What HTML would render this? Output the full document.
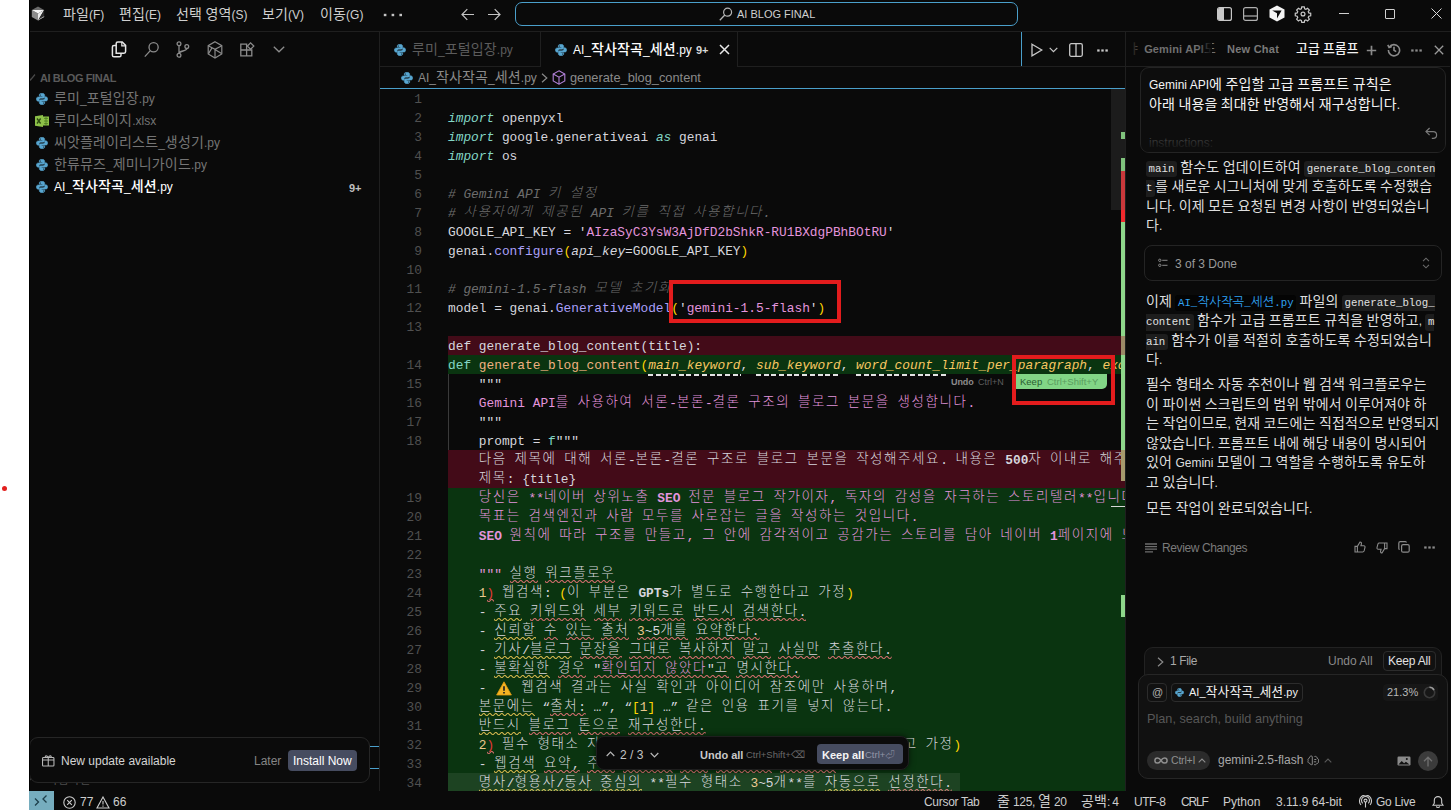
<!DOCTYPE html>
<html lang="ko">
<head>
<meta charset="utf-8">
<title>AI BLOG FINAL</title>
<style>
*{box-sizing:border-box}
html,body{margin:0;padding:0}
body{width:1451px;height:810px;position:relative;overflow:hidden;background:#0a0a0a;color:#ccc;
 font-family:"Liberation Sans","Noto Sans CJK KR",sans-serif;font-size:12px}
.abs{position:absolute}
svg{display:block}
#strip{left:0;top:0;width:29px;height:810px;background:#fff}
#title{left:29px;top:0;width:1422px;height:32px;background:#0a0a0a;border-bottom:1px solid #1f1f1f;z-index:5}
#side{left:29px;top:31px;width:351px;height:760px;background:#0a0a0a;border-right:1px solid #1f1f1f;overflow:hidden}
#ed{left:380px;top:31px;width:746px;height:760px;background:#0a0a0a}
#chat{left:1125px;top:31px;width:326px;height:760px;background:#0a0a0a;border-left:1px solid #1f1f1f}
#status{left:29px;top:791px;width:1422px;height:19px;background:#0a0a0a}

.w i.k{font-weight:500}
i.k{font-style:normal;line-height:0;font-size:1.1667em;letter-spacing:.01em;font-family:"Noto Sans CJK KR",sans-serif}
.t{position:absolute;white-space:pre;line-height:16px;height:16px}
/* title */
#title .m{color:#cfcfcf;font-size:12px}
#sbox{left:486px;top:2px;width:503px;height:24px;border:1px solid #4a9fcb;border-radius:7px}

/* sidebar */
#side .f{position:absolute;left:25px;white-space:pre;height:22px;line-height:20px;color:#757575;font-size:12px}
#notif{left:0;top:706px;width:341px;height:46px;border:1px solid #262626;border-radius:9px;background:#0b0b0b}

/* tabs */
#tabs{left:0;top:0;width:746px;height:36px;border-bottom:1px solid #1f1f1f}
#bc{left:0;top:35px;width:746px;height:23px;border-bottom:1px solid #4a9fcb}

/* chat */
#chat .ct{position:absolute;left:20px;white-space:pre;height:20px;line-height:19.5px;font-size:12px;color:#dedede}
#chat code{font-family:"Liberation Mono","NanumGothic",monospace;font-size:10.72px;background:#1d1d1d;color:#e0e0e0;padding:2.3px 2.6px;border-radius:3px;margin:0}
#chat code i.k{font-family:"NanumGothic",sans-serif;font-size:12.5px;letter-spacing:0}
#chat code.l{color:#2fa2f2;background:#040404}
#chat code.s{padding-left:0;border-radius:0 3px 3px 0}
#chat code.e{padding-right:0;border-radius:3px 0 0 3px}
#chat .tab{font-weight:bold;font-size:11px}
#chat .tab i.k{font-weight:500}

/* status */
#status .t{font-size:12px;color:#cdcdcd;top:3px}

/* overlays */
.rb{position:absolute;border:4px solid #e31c1d}
.dash{position:relative}
.dash:after{content:'';position:absolute;left:0;right:0;top:16px;height:2px;background:repeating-linear-gradient(90deg,#e4e4e4 0,#e4e4e4 5px,transparent 5px,transparent 7.7px)}
.sr,.sy{position:relative}
svg.q{position:absolute;left:0;bottom:-1px;width:100%;height:3px;display:block}
.ul{position:relative}
.ul:after{content:'';position:absolute;left:4px;right:0;top:15px;height:2px;background:#d8d8d8}
.rp{color:#e5383a}
.warn{display:inline-block;width:19.3px;color:transparent;position:relative;vertical-align:top;height:19px}
.warn svg{position:absolute;left:2px;top:1px}

/* editor */
#code{left:0;top:58px;width:745px;height:702px;overflow:hidden}
.ln{position:absolute;left:0;width:745px;height:19px;line-height:19px;white-space:pre;
 font-family:"Liberation Mono","NanumGothic",monospace;font-size:12.83px;color:#d6d6dd}
.ln .no{position:absolute;left:0;top:1px;width:42px;text-align:right;color:#505050}
.ln .cd{position:absolute;left:68px;top:0;height:19px;width:677px;padding-top:2px;line-height:17px}
.ln.del .cd{background:#430b18}
.ln.ins .cd{background:#0a3410}
.ln i.k{position:relative;top:-1px;font-style:inherit;font-size:13.5px;letter-spacing:1.58px;font-weight:300;font-family:"Noto Sans CJK KR","NanumGothic",sans-serif}
.kw{color:#83d6c5;font-style:italic}
.kd{color:#83d6c5}
.cm{color:#6d6d6d;font-style:italic}
.st{color:#e394dc}
.sq{color:#d6d6dd}
.fn{color:#aaa0fa}
.fd{color:#efb080}
.br{color:#ffd700}
.pi{color:#d6d6dd;font-style:italic}
.pa{color:#f8c762;font-style:italic}
.nm{color:#ebc88d}
.nm2{color:#d6d6dd}
.ln b{font-weight:bold}
</style>
</head>
<body>
<svg width="0" height="0" class="abs" style="left:0;top:0"><defs>
<pattern id="sqr" width="6" height="3" patternUnits="userSpaceOnUse"><g fill="#d26d6d"><polygon points="5.500,0 2.500,3 1.100,3 4.100,0"/><polygon points="4,0 6,2 6,0.600 5.400,0"/><polygon points="0,2 1,3 2.400,3 0,0.600"/></g></pattern>
<pattern id="sqy" width="6" height="3" patternUnits="userSpaceOnUse"><g fill="#d6b84e"><polygon points="5.500,0 2.500,3 1.100,3 4.100,0"/><polygon points="4,0 6,2 6,0.600 5.400,0"/><polygon points="0,2 1,3 2.400,3 0,0.600"/></g></pattern>
</defs></svg>
<div id="strip" class="abs"><div class="abs" style="left:2px;top:486px;width:5px;height:5px;border-radius:3px;background:#e2201e"></div></div>
<div class="abs" style="left:29px;top:0;width:1px;height:791px;background:#000;z-index:9"></div>
<div id="title" class="abs">
<svg class="abs" style="left:2px;top:6px" width="14" height="15" viewBox="0 0 14 15"><path d="M.8 4L7 .5 13.200 4z" fill="#6a6a6a"/><path d="M.8 4L7 7.500V14.500L.8 11z" fill="#8c8c8c"/><path d="M.8 4H13.200L7 7.500z" fill="#f6f6f6"/><path d="M13.200 4L7 14.500V7.500z" fill="#ececec"/><path d="M13.200 4V11L7 14.500z" fill="#2c2c2c"/><path d="M13.200 10.200V11L7 14.500V13.700z" fill="#cfcfcf"/></svg>
<span class="t m" style="left:34px;top:7px"><i class=k>파일</i>(F)</span>
<span class="t m" style="left:90px;top:7px"><i class=k>편집</i>(E)</span>
<span class="t m" style="left:147px;top:7px"><i class=k>선택</i> <i class=k>영역</i>(S)</span>
<span class="t m" style="left:233px;top:7px"><i class=k>보기</i>(V)</span>
<span class="t m" style="left:291px;top:7px"><i class=k>이동</i>(G)</span>
<svg class="abs" style="left:354px;top:13px" width="20" height="4" viewBox="0 0 20 4"><rect x=".8" y=".8" width="2.600" height="2.400" fill="#c4c4c4"/><rect x="8.600" y=".8" width="2.600" height="2.400" fill="#c4c4c4"/><rect x="16.400" y=".8" width="2.600" height="2.400" fill="#c4c4c4"/></svg>
<svg class="abs" style="left:432px;top:8px" width="14" height="13" viewBox="0 0 14 13"><path d="M13 6.5H1.2M6.3 1.2L1 6.5l5.3 5.3" fill="none" stroke="#c4c4c4" stroke-width="1.2"/></svg>
<svg class="abs" style="left:458px;top:8px" width="14" height="13" viewBox="0 0 14 13"><path d="M1 6.5h11.8M7.7 1.2L13 6.5l-5.3 5.3" fill="none" stroke="#c4c4c4" stroke-width="1.2"/></svg>
<div id="sbox" class="abs"></div>
<svg class="abs" style="left:690px;top:7px" width="14" height="14" viewBox="0 0 14 14"><circle cx="8.6" cy="5.2" r="4" fill="none" stroke="#b5b5b5" stroke-width="1.2"/><path d="M5.8 8L.8 13.2" stroke="#b5b5b5" stroke-width="1.3"/></svg>
<span class="t" style="left:708px;top:6px;font-size:11px;color:#cfcfcf">AI BLOG FINAL</span>
<svg class="abs" style="left:1188px;top:7px" width="15" height="14" viewBox="0 0 15 14"><rect x=".6" y=".6" width="13.8" height="12.8" rx="2" fill="none" stroke="#c8c8c8" stroke-width="1.2"/><path d="M1 2.5Q1 1 2.5 1H7v12H2.5Q1 13 1 11.5z" fill="#c8c8c8"/></svg>
<svg class="abs" style="left:1214px;top:7px" width="15" height="14" viewBox="0 0 15 14"><rect x=".6" y=".6" width="13.8" height="12.8" rx="2" fill="none" stroke="#b0b0b0" stroke-width="1.2"/><path d="M1 9h13" stroke="#b0b0b0" stroke-width="1.2"/></svg>
<svg class="abs" style="left:1240px;top:5px" width="16" height="17" viewBox="0 0 16 17"><path d="M8 .5L15.5 4.6v7.8L8 16.5.5 12.4V4.6z" fill="#f4f4f4"/><path d="M3.2 5.4L12.6 5.4 8 13.6 8 8.3z" fill="#0a0a0a"/></svg>
<svg class="abs" style="left:1265px;top:5px" width="18" height="18" viewBox="0 0 24 24" fill="none" stroke="#c8c8c8" stroke-width="1.6"><circle cx="12" cy="12" r="2.6"/><path d="M10.3 2.5h3.4l.5 2.6 1.7.7 2.2-1.5 2.4 2.4-1.5 2.2.7 1.7 2.6.5v3.4l-2.6.5-.7 1.7 1.5 2.2-2.4 2.4-2.2-1.5-1.7.7-.5 2.6h-3.4l-.5-2.6-1.7-.7-2.2 1.5-2.4-2.4 1.5-2.2-.7-1.7-2.6-.5v-3.4l2.6-.5.7-1.7-1.5-2.2 2.4-2.4 2.2 1.5 1.7-.7z"/></svg>
<div class="abs" style="left:1310px;top:13px;width:10px;height:1px;background:#d0d0d0"></div>
<div class="abs" style="left:1356px;top:9px;width:10px;height:10px;border:1px solid #d0d0d0;border-radius:1px"></div>
<svg class="abs" style="left:1402px;top:8px" width="11" height="11" viewBox="0 0 11 11"><path d="M.5.5l10 10M10.5.5l-10 10" stroke="#d8d8d8" stroke-width="1"/></svg>
</div>
<div id="side" class="abs">
<svg class="abs" style="left:82px;top:10px" width="16" height="17" viewBox="0 0 16 17" fill="none" stroke="#e6e6e6" stroke-width="1.5"><path d="M5.2 12.2V2.6Q5.2 1 6.8 1h4.4l3.4 3.4v6.2q0 1.6-1.6 1.6z"/><path d="M10.8 1v3.8h3.8" stroke-width="1.2"/><path d="M5.2 4.4H3Q1.4 4.4 1.4 6v8.2q0 1.6 1.6 1.6h5.4q1.6 0 1.6-1.6v-2"/></svg>
<svg class="abs" style="left:115px;top:10px" width="16" height="17" viewBox="0 0 16 17" fill="none" stroke="#8c8c8c" stroke-width="1.3"><circle cx="9.6" cy="6.2" r="4.6"/><path d="M6.3 9.6L.8 15.6"/></svg>
<svg class="abs" style="left:147px;top:10px" width="14" height="17" viewBox="0 0 14 17" fill="none" stroke="#8c8c8c" stroke-width="1.3"><circle cx="3" cy="2.8" r="1.9"/><circle cx="3" cy="14.2" r="1.9"/><circle cx="10.8" cy="5.6" r="1.9"/><path d="M3 4.7v7.6M10.8 7.5c0 3-7.8 2-7.8 5"/></svg>
<svg class="abs" style="left:178px;top:10px" width="16" height="18" viewBox="0 0 16 18" fill="none" stroke="#8c8c8c" stroke-width="1.2"><path d="M8 .8l6.8 3.9v8.2L8 17 1.200 12.900V4.7z"/><path d="M1.200 4.700L8 8.400 14.800 4.700M8 8.400V17M8 8.400l6.500 4.200M1.500 12.600l3.800-6.200"/></svg>
<svg class="abs" style="left:211px;top:11px" width="15" height="15" viewBox="0 0 15 15" fill="none" stroke="#8c8c8c" stroke-width="1.3"><path d="M.8 2.200h5.800v11.600H.8zM.8 8h11v5.800H.8M6.600 8h5.200"/><path d="M10.600 .9l3.200 3.200-3.200 3.200-3.200-3.200z"/></svg>
<svg class="abs" style="left:244px;top:15px" width="12" height="7" viewBox="0 0 12 7" fill="none" stroke="#8c8c8c" stroke-width="1.3"><path d="M.8.800L6 5.800 11.200.800"/></svg>

<svg class="abs" style="left:0;top:43px" width="7" height="8" viewBox="0 0 7 8" fill="none" stroke="#4a4a4a" stroke-width="1.2"><path d="M-1 3l2.500 3L6 .5"/></svg>
<span class="t" style="left:11px;top:39px;font-size:11px;font-weight:bold;color:#5a5a5a;letter-spacing:-.4px">AI BLOG FINAL</span>
<svg class="abs" style="left:7px;top:62px" width="12" height="12" viewBox="0 0 12 12"><g fill="#58a6d0" stroke="#58a6d0" stroke-width=".5"><path d="M6 .3C3.700 .3 3.300 1.300 3.300 2.200V3.200H6.200V3.900H2.300C.900 3.900 .3 4.900 .3 6S.900 8.200 2.300 8.200H3.200V6.900C3.200 5.800 4.100 5.200 5 5.200H7.200C8.100 5.200 8.700 4.600 8.700 3.800V2.200C8.700 1.100 7.800 .3 6 .3z"/><path transform="rotate(180 6 6)" d="M6 .3C3.700 .3 3.300 1.300 3.300 2.200V3.200H6.200V3.900H2.300C.900 3.900 .3 4.900 .3 6S.900 8.200 2.300 8.200H3.200V6.900C3.200 5.800 4.100 5.200 5 5.200H7.200C8.100 5.200 8.700 4.600 8.700 3.800V2.200C8.700 1.100 7.800 .3 6 .3z"/></g><circle cx="4.500" cy="1.900" r=".5" fill="#0a0a0a"/><circle cx="7.500" cy="10.100" r=".5" fill="#0a0a0a"/></svg>
<span class="f" style="top:58px"><i class=k>루미</i>_<i class=k>포털입장</i>.py</span>
<svg class="abs" style="left:6px;top:84px" width="14" height="12" viewBox="0 0 14 12"><path d="M0 1.200L8 0v12L0 10.800z" fill="#8dc149"/><rect x="8" y="1.500" width="6" height="9" fill="#8dc149"/><path d="M9 3.400h4M9 6h4M9 8.600h4M11 1.500v9" stroke="#4a7a1e" stroke-width=".8"/><path d="M2 3.500l3.600 5M5.600 3.500L2 8.500" stroke="#2c4a10" stroke-width="1.300"/></svg>
<span class="f" style="top:80px"><i class=k>루미스테이지</i>.xlsx</span>
<svg class="abs" style="left:7px;top:106px" width="12" height="12" viewBox="0 0 12 12"><g fill="#58a6d0" stroke="#58a6d0" stroke-width=".5"><path d="M6 .3C3.700 .3 3.300 1.300 3.300 2.200V3.200H6.200V3.900H2.300C.900 3.900 .3 4.900 .3 6S.900 8.200 2.300 8.200H3.200V6.900C3.200 5.800 4.100 5.200 5 5.200H7.200C8.100 5.200 8.700 4.600 8.700 3.800V2.200C8.700 1.100 7.800 .3 6 .3z"/><path transform="rotate(180 6 6)" d="M6 .3C3.700 .3 3.300 1.300 3.300 2.200V3.200H6.200V3.900H2.300C.900 3.900 .3 4.900 .3 6S.900 8.200 2.300 8.200H3.200V6.900C3.200 5.800 4.100 5.200 5 5.200H7.200C8.100 5.200 8.700 4.600 8.700 3.800V2.200C8.700 1.100 7.800 .3 6 .3z"/></g><circle cx="4.500" cy="1.900" r=".5" fill="#0a0a0a"/><circle cx="7.500" cy="10.100" r=".5" fill="#0a0a0a"/></svg>
<span class="f" style="top:102px"><i class=k>씨앗플레이리스트</i>_<i class=k>생성기</i>.py</span>
<svg class="abs" style="left:7px;top:128px" width="12" height="12" viewBox="0 0 12 12"><g fill="#58a6d0" stroke="#58a6d0" stroke-width=".5"><path d="M6 .3C3.700 .3 3.300 1.300 3.300 2.200V3.200H6.200V3.900H2.300C.900 3.900 .3 4.900 .3 6S.900 8.200 2.300 8.200H3.200V6.900C3.200 5.800 4.100 5.200 5 5.200H7.200C8.100 5.200 8.700 4.600 8.700 3.800V2.200C8.700 1.100 7.800 .3 6 .3z"/><path transform="rotate(180 6 6)" d="M6 .3C3.700 .3 3.300 1.300 3.300 2.200V3.200H6.200V3.900H2.300C.900 3.900 .3 4.900 .3 6S.900 8.200 2.300 8.200H3.200V6.900C3.200 5.800 4.100 5.200 5 5.200H7.200C8.100 5.200 8.700 4.600 8.700 3.800V2.200C8.700 1.100 7.800 .3 6 .3z"/></g><circle cx="4.500" cy="1.900" r=".5" fill="#0a0a0a"/><circle cx="7.500" cy="10.100" r=".5" fill="#0a0a0a"/></svg>
<span class="f" style="top:124px"><i class=k>한류뮤즈</i>_<i class=k>제미니가이드</i>.py</span>
<svg class="abs" style="left:7px;top:150px" width="12" height="12" viewBox="0 0 12 12"><g fill="#58a6d0" stroke="#58a6d0" stroke-width=".5"><path d="M6 .3C3.700 .3 3.300 1.300 3.300 2.200V3.200H6.200V3.900H2.300C.900 3.900 .3 4.900 .3 6S.900 8.200 2.300 8.200H3.200V6.900C3.200 5.800 4.100 5.200 5 5.200H7.200C8.100 5.200 8.700 4.600 8.700 3.800V2.200C8.700 1.100 7.800 .3 6 .3z"/><path transform="rotate(180 6 6)" d="M6 .3C3.700 .3 3.300 1.300 3.300 2.200V3.200H6.200V3.900H2.300C.900 3.900 .3 4.900 .3 6S.900 8.200 2.300 8.200H3.200V6.900C3.200 5.800 4.100 5.200 5 5.200H7.200C8.100 5.200 8.700 4.600 8.700 3.800V2.200C8.700 1.100 7.800 .3 6 .3z"/></g><circle cx="4.500" cy="1.900" r=".5" fill="#0a0a0a"/><circle cx="7.500" cy="10.100" r=".5" fill="#0a0a0a"/></svg>
<span class="f w" style="top:146px;color:#fff">AI_<i class=k>작사작곡</i>_<i class=k>세션</i>.py</span>
<span class="t" style="left:320px;top:149px;font-size:11px;font-weight:bold;color:#c0c0c0">9+</span>

<div class="abs" style="left:330px;top:715px;width:21px;height:23px;border:1px solid #4a9fcb;border-left:0;border-right:0"></div>
<svg class="abs" style="left:0;top:738px" width="6" height="14" viewBox="0 0 6 14" fill="none" stroke="#3c3c3c" stroke-width="1.200"><path d="M-1 1L4.500 7-1 13"/></svg>
<span class="t" style="left:18px;top:742px;font-size:10px;color:#4c4c4c;letter-spacing:-.5px"><i class=k>타임라인</i></span>
<div id="notif" class="abs">
<svg class="abs" style="left:12px;top:17px" width="12.500" height="11.600" viewBox="0 0 14 13" fill="none" stroke="#b8b8b8" stroke-width="1.200"><rect x=".6" y="2.800" width="12.800" height="9.600" rx="1"/><path d="M7 2.800v9.600M.6 5.600h12.800M7 2.800C5.500.2 3.200.6 3.800 2.800M7 2.800C8.500.2 10.800.6 10.200 2.800"/></svg>
<span class="t" style="left:31px;top:15px;font-size:12px;color:#d4d4d4">New update available</span>
<span class="t" style="left:224px;top:15px;font-size:12px;color:#858585">Later</span>
<div class="abs" style="left:258px;top:12px;width:69px;height:21px;border-radius:4px;background:#464c60"></div>
<span class="t" style="left:263px;top:15px;font-size:12px;color:#fff">Install Now</span>
</div>
</div>
<div id="ed" class="abs">

<div id="tabs" class="abs"></div>
<div class="abs" style="left:160px;top:0;width:198px;height:36px;background:#0a0a0a;border-left:1px solid #1f1f1f;border-right:1px solid #1f1f1f"></div>
<svg class="abs" style="left:14px;top:13px" width="12" height="12" viewBox="0 0 12 12"><g fill="#58a6d0" stroke="#58a6d0" stroke-width=".5"><path d="M6 .3C3.700 .3 3.300 1.300 3.300 2.200V3.200H6.200V3.900H2.300C.900 3.900 .3 4.900 .3 6S.900 8.200 2.300 8.200H3.200V6.900C3.200 5.800 4.100 5.200 5 5.200H7.200C8.100 5.200 8.700 4.600 8.700 3.800V2.200C8.700 1.100 7.800 .3 6 .3z"/><path transform="rotate(180 6 6)" d="M6 .3C3.700 .3 3.300 1.300 3.300 2.200V3.200H6.200V3.900H2.300C.900 3.900 .3 4.900 .3 6S.900 8.200 2.300 8.200H3.200V6.900C3.200 5.800 4.100 5.200 5 5.200H7.200C8.100 5.200 8.700 4.600 8.700 3.800V2.200C8.700 1.100 7.800 .3 6 .3z"/></g><circle cx="4.500" cy="1.900" r=".5" fill="#0a0a0a"/><circle cx="7.500" cy="10.100" r=".5" fill="#0a0a0a"/></svg>
<span class="t" style="left:32px;top:11px;font-size:12px;color:#5c5c5c"><i class=k>루미</i>_<i class=k>포털입장</i>.py</span>
<svg class="abs" style="left:175px;top:13px" width="12" height="12" viewBox="0 0 12 12"><g fill="#58a6d0" stroke="#58a6d0" stroke-width=".5"><path d="M6 .3C3.700 .3 3.300 1.300 3.300 2.200V3.200H6.200V3.900H2.300C.900 3.900 .3 4.900 .3 6S.900 8.200 2.300 8.200H3.200V6.900C3.200 5.800 4.100 5.200 5 5.200H7.200C8.100 5.200 8.700 4.600 8.700 3.800V2.200C8.700 1.100 7.800 .3 6 .3z"/><path transform="rotate(180 6 6)" d="M6 .3C3.700 .3 3.300 1.300 3.300 2.200V3.200H6.200V3.900H2.300C.900 3.900 .3 4.900 .3 6S.900 8.200 2.300 8.200H3.200V6.900C3.200 5.800 4.100 5.200 5 5.200H7.200C8.100 5.200 8.700 4.600 8.700 3.800V2.200C8.700 1.100 7.800 .3 6 .3z"/></g><circle cx="4.500" cy="1.900" r=".5" fill="#0a0a0a"/><circle cx="7.500" cy="10.100" r=".5" fill="#0a0a0a"/></svg>
<span class="t w" style="left:193px;top:11px;font-size:12px;color:#fff">AI_<i class=k>작사작곡</i>_<i class=k>세션</i>.py</span>
<span class="t" style="left:316px;top:11px;font-size:11px;color:#d8d8d8;font-weight:bold">9+</span>
<svg class="abs" style="left:339px;top:13px" width="11" height="11" viewBox="0 0 11 11"><path d="M1 1l9 9M10 1l-9 9" stroke="#e8e8e8" stroke-width="1.500"/></svg>
<div class="abs" style="left:641px;top:0;width:1px;height:35px;background:#4a9fcb"></div>
<svg class="abs" style="left:651px;top:12px" width="12" height="14" viewBox="0 0 12 14" fill="none" stroke="#c8c8c8" stroke-width="1.300"><path d="M1 1.200L10.800 7 1 12.800z"/></svg>
<svg class="abs" style="left:669px;top:16px" width="9" height="6" viewBox="0 0 9 6" fill="none" stroke="#c8c8c8" stroke-width="1.200"><path d="M.7.800L4.500 4.600 8.300.800"/></svg>
<svg class="abs" style="left:689px;top:12px" width="14" height="14" viewBox="0 0 14 14" fill="none" stroke="#c8c8c8" stroke-width="1.300"><rect x=".7" y=".7" width="12.600" height="12.600" rx="1.500"/><path d="M7 .7v12.600"/></svg>
<svg class="abs" style="left:717px;top:18px" width="11" height="3" viewBox="0 0 11 3"><rect x=".2" y=".4" width="2.400" height="2.200" fill="#c8c8c8"/><rect x="4.300" y=".4" width="2.400" height="2.200" fill="#c8c8c8"/><rect x="8.400" y=".4" width="2.400" height="2.200" fill="#c8c8c8"/></svg>
<div id="bc" class="abs">
<svg class="abs" style="left:21px;top:6px" width="12" height="12" viewBox="0 0 12 12"><g fill="#58a6d0" stroke="#58a6d0" stroke-width=".5"><path d="M6 .3C3.700 .3 3.300 1.300 3.300 2.200V3.200H6.200V3.900H2.300C.900 3.900 .3 4.900 .3 6S.900 8.200 2.300 8.200H3.200V6.900C3.200 5.800 4.100 5.200 5 5.200H7.200C8.100 5.200 8.700 4.600 8.700 3.800V2.200C8.700 1.100 7.800 .3 6 .3z"/><path transform="rotate(180 6 6)" d="M6 .3C3.700 .3 3.300 1.300 3.300 2.200V3.200H6.200V3.900H2.300C.900 3.900 .3 4.900 .3 6S.900 8.200 2.300 8.200H3.200V6.900C3.200 5.800 4.100 5.200 5 5.200H7.200C8.100 5.200 8.700 4.600 8.700 3.800V2.200C8.700 1.100 7.800 .3 6 .3z"/></g><circle cx="4.500" cy="1.900" r=".5" fill="#0a0a0a"/><circle cx="7.500" cy="10.100" r=".5" fill="#0a0a0a"/></svg>
<span class="t" style="left:38px;top:4px;font-size:12px;color:#8a8a8a">AI_<i class=k>작사작곡</i>_<i class=k>세션</i>.py</span>
<svg class="abs" style="left:161px;top:7px" width="7" height="10" viewBox="0 0 7 10" fill="none" stroke="#8a8a8a" stroke-width="1.200"><path d="M1 .8L5.800 5 1 9.200"/></svg>
<svg class="abs" style="left:172px;top:4px" width="14" height="15" viewBox="0 0 14 15" fill="none" stroke="#b180d7" stroke-width="1.100"><path d="M7 .8l5.800 3.200v7L7 14.200 1.200 11V4z"/><path d="M1.200 4L7 7.200 12.800 4M7 7.200v7"/></svg>
<span class="t" style="left:190px;top:4px;font-size:12.800px;color:#8a8a8a">generate_blog_content</span>
</div>
<div id="code" class="abs">
<div class="ln " style="top:0px"><span class=no>1</span><div class=cd></div></div>
<div class="ln " style="top:19px"><span class=no>2</span><div class=cd><span class="kw">import</span> openpyxl</div></div>
<div class="ln " style="top:38px"><span class=no>3</span><div class=cd><span class="kw">import</span> google.generativeai <span class="kw">as</span> genai</div></div>
<div class="ln " style="top:57px"><span class=no>4</span><div class=cd><span class="kw">import</span> os</div></div>
<div class="ln " style="top:76px"><span class=no>5</span><div class=cd></div></div>
<div class="ln " style="top:95px"><span class=no>6</span><div class=cd><span class="cm"># Gemini API <i class=k>키</i> <i class=k>설정</i></span></div></div>
<div class="ln " style="top:114px"><span class=no>7</span><div class=cd><span class="cm"># <i class=k>사용자에게</i> <i class=k>제공된</i> API <i class=k>키를</i> <i class=k>직접</i> <i class=k>사용합니다</i>.</span></div></div>
<div class="ln " style="top:133px"><span class=no>8</span><div class=cd>GOOGLE_API_KEY = '<span class="st">AIzaSyC3YsW3AjDfD2bShkR-RU1BXdgPBhBOtRU</span>'</div></div>
<div class="ln " style="top:152px"><span class=no>9</span><div class=cd>genai.<span class="fn">configure</span><span class="br">(</span><span class="pi">api_key</span>=GOOGLE_API_KEY<span class="br">)</span></div></div>
<div class="ln " style="top:171px"><span class=no>10</span><div class=cd></div></div>
<div class="ln " style="top:190px"><span class=no>11</span><div class=cd><span class="cm"># gemini-1.5-flash <i class=k>모델</i> <i class=k>초기화</i></span></div></div>
<div class="ln " style="top:209px"><span class=no>12</span><div class=cd>model = genai.<span class="fn">GenerativeModel</span><span class="br">(</span>'<span class="st">gemini-1.5-flash</span>'<span class="br">)</span></div></div>
<div class="ln " style="top:228px"><span class=no>13</span><div class=cd></div></div>
<div class="ln del" style="top:247px"><span class=no></span><div class=cd>def generate_blog_content(title):</div></div>
<div class="ln ins" style="top:266px"><span class=no>14</span><div class=cd><span class="kd">def</span> <span class="fd">generate_blog_content</span><span class="br">(</span><span class="pa dash">main_keyword</span>, <span class="pa dash">sub_keyword</span>, <span class="pa dash">word_count_limit_per_paragraph</span>, <span class="pa">exo</span></div></div>
<div class="ln g" style="top:285px"><span class=no>15</span><div class=cd>    <span class="sq">"""</span></div></div>
<div class="ln g" style="top:304px"><span class=no>16</span><div class=cd>    <span class="st">Gemini API<i class=k>를</i> <i class=k>사용하여</i> <i class=k>서론</i>-<i class=k>본론</i>-<i class=k>결론</i> <i class=k>구조의</i> <i class=k>블로그</i> <i class=k>본문을</i> <i class=k>생성합니다</i>.</span></div></div>
<div class="ln g" style="top:323px"><span class=no>17</span><div class=cd>    <span class="sq">"""</span></div></div>
<div class="ln g" style="top:342px"><span class=no>18</span><div class=cd>    prompt = <span class="kd">f</span><span class="sq">"""</span></div></div>
<div class="ln del" style="top:361px"><span class=no></span><div class=cd>    <i class=k>다음</i> <i class=k>제목에</i> <i class=k>대해</i> <i class=k>서론</i>-<i class=k>본론</i>-<i class=k>결론</i> <i class=k>구조로</i> <i class=k>블로그</i> <i class=k>본문을</i> <i class=k>작성해주세요</i>. <i class=k>내용은</i> <b>500</b><i class=k>자</i> <i class=k>이내로</i> <i class=k>해주세요</i></div></div>
<div class="ln del" style="top:380px"><span class=no></span><div class=cd>    <i class=k>제목</i>: {title}</div></div>
<div class="ln ins" style="top:399px"><span class=no>19</span><div class=cd>    <span class="st"><i class=k>당신은</i> **<i class=k>네이버</i> <i class=k>상위노출</i> <b>SEO</b> <i class=k>전문</i> <i class=k>블로그</i> <i class=k>작가이자</i>, <i class=k>독자의</i> <i class=k>감성을</i> <i class=k>자극하는</i> <i class=k>스토리텔러</i>**<i class=k>입</i><span class="ul"><i class=k>니다</i></span></span></div></div>
<div class="ln ins" style="top:418px"><span class=no>20</span><div class=cd>    <span class="st"><i class=k>목표는</i> <i class=k>검색엔진과</i> <i class=k>사람</i> <i class=k>모두를</i> <i class=k>사로잡는</i> <i class=k>글을</i> <i class=k>작성하는</i> <i class=k>것입니다</i>.</span></div></div>
<div class="ln ins" style="top:437px"><span class=no>21</span><div class=cd>    <span class="st"><b>SEO</b> <i class=k>원칙에</i> <i class=k>따라</i> <i class=k>구조를</i> <i class=k>만들고</i>, <i class=k>그</i> <i class=k>안에</i> <i class=k>감각적이고</i> <i class=k>공감가는</i> <i class=k>스토리를</i> <i class=k>담아</i> <i class=k>네이버</i> <b>1</b><i class=k>페이지에</i> <i class=k>노출</i></span></div></div>
<div class="ln ins" style="top:456px"><span class=no>22</span><div class=cd></div></div>
<div class="ln ins" style="top:475px"><span class=no>23</span><div class=cd>    <span class="st">"""</span> <span class="sr"><i class=k>실행</i><svg class="q"><rect width="100%" height="3" fill="url(#sqr)"/></svg></span> <span class="sr"><i class=k>워크플로우</i><svg class="q"><rect width="100%" height="3" fill="url(#sqr)"/></svg></span></div></div>
<div class="ln ins" style="top:494px"><span class=no>24</span><div class=cd>    <span class="nm">1</span><span class="sr rp">)<svg class="q"><rect width="100%" height="3" fill="url(#sqr)"/></svg></span> <i class=k>웹검색</i>: <span class="br">(</span><i class=k>이</i> <i class=k>부분은</i> <b>GPTs</b><i class=k>가</i> <i class=k>별도로</i> <i class=k>수행한다고</i> <i class=k>가정</i><span class="br">)</span></div></div>
<div class="ln ins" style="top:513px"><span class=no>25</span><div class=cd>    - <span class="sy"><i class=k>주요</i><svg class="q"><rect width="100%" height="3" fill="url(#sqy)"/></svg></span> <span class="sr"><i class=k>키워드와</i><svg class="q"><rect width="100%" height="3" fill="url(#sqr)"/></svg></span> <span class="sr"><i class=k>세부</i><svg class="q"><rect width="100%" height="3" fill="url(#sqr)"/></svg></span> <span class="sr"><i class=k>키워드로</i><svg class="q"><rect width="100%" height="3" fill="url(#sqr)"/></svg></span> <span class="sr"><i class=k>반드시</i><svg class="q"><rect width="100%" height="3" fill="url(#sqr)"/></svg></span> <span class="sr"><i class=k>검색한다</i>.<svg class="q"><rect width="100%" height="3" fill="url(#sqr)"/></svg></span></div></div>
<div class="ln ins" style="top:532px"><span class=no>26</span><div class=cd>    - <span class="sy"><i class=k>신뢰할</i><svg class="q"><rect width="100%" height="3" fill="url(#sqy)"/></svg></span> <span class="sr"><i class=k>수</i><svg class="q"><rect width="100%" height="3" fill="url(#sqr)"/></svg></span> <span class="sr"><i class=k>있는</i><svg class="q"><rect width="100%" height="3" fill="url(#sqr)"/></svg></span> <span class="sr"><i class=k>출처</i><svg class="q"><rect width="100%" height="3" fill="url(#sqr)"/></svg></span> <span class="sr"><span class="nm">3</span>~<span class="nm2">5</span><i class=k>개를</i><svg class="q"><rect width="100%" height="3" fill="url(#sqr)"/></svg></span> <span class="sr"><i class=k>요약한다</i>.<svg class="q"><rect width="100%" height="3" fill="url(#sqr)"/></svg></span></div></div>
<div class="ln ins" style="top:551px"><span class=no>27</span><div class=cd>    - <span class="sy"><i class=k>기사</i>/<i class=k>블로그</i><svg class="q"><rect width="100%" height="3" fill="url(#sqy)"/></svg></span> <span class="sr"><i class=k>문장을</i><svg class="q"><rect width="100%" height="3" fill="url(#sqr)"/></svg></span> <span class="sr"><i class=k>그대로</i><svg class="q"><rect width="100%" height="3" fill="url(#sqr)"/></svg></span> <span class="sr"><i class=k>복사하지</i><svg class="q"><rect width="100%" height="3" fill="url(#sqr)"/></svg></span> <span class="sr"><i class=k>말고</i><svg class="q"><rect width="100%" height="3" fill="url(#sqr)"/></svg></span> <span class="sr"><i class=k>사실만</i><svg class="q"><rect width="100%" height="3" fill="url(#sqr)"/></svg></span> <span class="sr"><i class=k>추출한다</i>.<svg class="q"><rect width="100%" height="3" fill="url(#sqr)"/></svg></span></div></div>
<div class="ln ins" style="top:570px"><span class=no>28</span><div class=cd>    - <span class="sy"><i class=k>불확실한</i><svg class="q"><rect width="100%" height="3" fill="url(#sqy)"/></svg></span> <span class="sr"><i class=k>경우</i><svg class="q"><rect width="100%" height="3" fill="url(#sqr)"/></svg></span> <span class="sr">"<span class="st"><i class=k>확인되지</i> <i class=k>않았다</i></span>"<i class=k>고</i><svg class="q"><rect width="100%" height="3" fill="url(#sqr)"/></svg></span> <span class="sr"><i class=k>명시한다</i>.<svg class="q"><rect width="100%" height="3" fill="url(#sqr)"/></svg></span></div></div>
<div class="ln ins" style="top:589px"><span class=no>29</span><div class=cd>    - <span class=warn>⚠<svg width="16" height="15" viewBox="0 0 16 15"><path d="M8 .8L15.400 14H.6z" fill="#f5b324" stroke="#e09a10" stroke-width=".8" stroke-linejoin="round"/><path d="M8 5.200v4.600M8 11v1.500" stroke="#222" stroke-width="1.700"/></svg></span> <i class=k>웹검색</i> <i class=k>결과는</i> <i class=k>사실</i> <i class=k>확인과</i> <i class=k>아이디어</i> <i class=k>참조에만</i> <i class=k>사용하며</i>,</div></div>
<div class="ln ins" style="top:608px"><span class=no>30</span><div class=cd>    <span class="sy"><i class=k>본문에는</i><svg class="q"><rect width="100%" height="3" fill="url(#sqy)"/></svg></span> “<span class="sr"><i class=k>출처</i>:<svg class="q"><rect width="100%" height="3" fill="url(#sqr)"/></svg></span> …”, “<span class="br">[</span><span class="nm">1</span><span class="br">]</span> …” <i class=k>같은</i> <i class=k>인용</i> <i class=k>표기를</i> <i class=k>넣지</i> <i class=k>않는다</i>.</div></div>
<div class="ln ins" style="top:627px"><span class=no>31</span><div class=cd>    <span class="sy"><i class=k>반드시</i><svg class="q"><rect width="100%" height="3" fill="url(#sqy)"/></svg></span> <span class="sr"><i class=k>블로그</i><svg class="q"><rect width="100%" height="3" fill="url(#sqr)"/></svg></span> <span class="sr"><i class=k>톤으로</i><svg class="q"><rect width="100%" height="3" fill="url(#sqr)"/></svg></span> <span class="sr"><i class=k>재구성한다</i>.<svg class="q"><rect width="100%" height="3" fill="url(#sqr)"/></svg></span></div></div>
<div class="ln ins" style="top:646px"><span class=no>32</span><div class=cd>    <span class="nm">2</span><span class="sr rp">)<svg class="q"><rect width="100%" height="3" fill="url(#sqr)"/></svg></span> <i class=k>필수</i> <i class=k>형태소</i> <i class=k>자동</i> <i class=k>추천</i>: <span class="br">(</span><i class=k>이</i> <i class=k>부분도</i> <b>GPTs</b><i class=k>가</i> <i class=k>별도로</i> <i class=k>수행한다고</i> <i class=k>가정</i><span class="br">)</span></div></div>
<div class="ln ins" style="top:665px"><span class=no>33</span><div class=cd>    - <span class="sy"><i class=k>웹검색</i><svg class="q"><rect width="100%" height="3" fill="url(#sqy)"/></svg></span> <span class="sr"><i class=k>요약</i>,<svg class="q"><rect width="100%" height="3" fill="url(#sqr)"/></svg></span> <span class="sr"><i class=k>주요</i><svg class="q"><rect width="100%" height="3" fill="url(#sqr)"/></svg></span> <span class="sr"><i class=k>키워드</i>,<svg class="q"><rect width="100%" height="3" fill="url(#sqr)"/></svg></span> <span class="sr"><i class=k>세부</i><svg class="q"><rect width="100%" height="3" fill="url(#sqr)"/></svg></span> <span class="sr"><i class=k>키워드를</i><svg class="q"><rect width="100%" height="3" fill="url(#sqr)"/></svg></span> <span class="sr"><i class=k>기반으로</i><svg class="q"><rect width="100%" height="3" fill="url(#sqr)"/></svg></span></div></div>
<div class="ln ins cur" style="top:684px"><span class=no>34</span><div class=cd>    <span class="sy"><i class=k>명사</i>/<i class=k>형용사</i>/<i class=k>동사</i><svg class="q"><rect width="100%" height="3" fill="url(#sqy)"/></svg></span> <span class="sy"><i class=k>중심의</i><svg class="q"><rect width="100%" height="3" fill="url(#sqy)"/></svg></span> **<i class=k>필수</i> <i class=k>형태소</i> <span class="nm">3</span>~<span class="nm2">5</span><i class=k>개</i>**<i class=k>를</i> <span class="sy"><i class=k>자동으로</i><svg class="q"><rect width="100%" height="3" fill="url(#sqy)"/></svg></span> <span class="sr"><i class=k>선정한다</i>.<svg class="q"><rect width="100%" height="3" fill="url(#sqr)"/></svg></span></div></div>

<div class="abs" style="left:68px;top:285px;width:1px;height:76px;background:#3a3a3a"></div>
<div class="abs" style="left:68px;top:684px;width:512px;height:19px;background:rgba(255,255,255,.08)"></div>
<div class="abs" style="left:731px;top:0;width:14px;height:121px;background:rgba(255,255,255,.075)"></div>
<div class="abs" style="left:741px;top:43px;width:4px;height:7px;background:#7fc27c"></div>
<div class="abs" style="left:741px;top:69px;width:4px;height:13px;background:#7fc27c"></div>
<div class="abs" style="left:741px;top:82px;width:4px;height:39px;background:#c9383b"></div>
<div class="abs" style="left:741px;top:121px;width:4px;height:12px;background:#f0292c"></div>
<div class="abs" style="left:741px;top:133px;width:4px;height:228px;background:#8ed68a"></div>
<div class="abs" style="left:741px;top:247px;width:4px;height:19px;background:#9c8a66"></div>
<div class="abs" style="left:741px;top:361px;width:4px;height:31px;background:#a69a6c"></div>
<div class="abs" style="left:741px;top:506px;width:4px;height:22px;background:#8ed68a"></div>
<div class="rb" style="left:289px;top:191px;width:172px;height:43px"></div>
<div class="abs" style="left:566px;top:285px;width:70px;height:16px;background:#0a0a0a"></div>
<span class="t" style="left:571px;top:285px;font-size:9px;line-height:16px;color:#8c8c8c;font-weight:bold;letter-spacing:-.1px">Undo</span>
<span class="t" style="left:598px;top:285px;font-size:9px;line-height:16px;color:#5e5e5e">Ctrl+N</span>
<div class="abs" style="left:636px;top:285px;width:91px;height:15px;background:#82d586;border-radius:0 0 5px 0"></div>
<span class="t" style="left:640px;top:285px;font-size:9.500px;line-height:15px;color:#2a5c30">Keep</span>
<span class="t" style="left:667px;top:285px;font-size:9.500px;line-height:15px;color:#5a9c5f">Ctrl+Shift+Y</span>
<div class="rb" style="left:632px;top:266px;width:103px;height:50px"></div>
<div class="abs" style="left:216px;top:647px;width:313px;height:34px;background:#0b0b0b;border:1px solid #1e1e1e;border-radius:8px;box-shadow:0 0 6px rgba(0,0,0,.6)"></div>
<svg class="abs" style="left:226px;top:662px" width="9" height="6" viewBox="0 0 9 6" fill="none" stroke="#b8b8b8" stroke-width="1.200"><path d="M.7 5L4.500 1.200 8.300 5"/></svg>
<span class="t" style="left:240px;top:658px;font-size:12px;color:#c4c4c4">2 / 3</span>
<svg class="abs" style="left:270px;top:663px" width="9" height="6" viewBox="0 0 9 6" fill="none" stroke="#b8b8b8" stroke-width="1.200"><path d="M.7 1L4.500 4.800 8.300 1"/></svg>
<span class="t" style="left:320px;top:658px;font-size:11px;font-weight:bold;color:#c8c8c8">Undo all</span>
<span class="t" style="left:366px;top:658px;font-size:9.500px;color:#6a6a6a">Ctrl+Shift+⌫</span>
<div class="abs" style="left:437px;top:655px;width:86px;height:20px;border-radius:4px;background:#464c60"></div>
<span class="t" style="left:442px;top:658px;font-size:11px;font-weight:bold;color:#f4f4f4">Keep all</span>
<span class="t" style="left:485px;top:658px;font-size:9.500px;color:#9297a8">Ctrl+⏎</span>
</div>
</div>
<div id="chat" class="abs">
<div class="abs" style="left:0;top:0;width:324px;height:36px;border-bottom:1px solid #1f1f1f"></div>
<span class="t tab" style="left:3px;top:10px;color:#6f6f6f;letter-spacing:.15px"><i class=k>ㅑ</i> Gemini API<i class=k>도</i></span>
<div class="abs" style="left:6px;top:8px;width:8px;height:20px;background:linear-gradient(90deg,#0a0a0a,rgba(10,10,10,0))"></div>
<div class="abs" style="left:72px;top:8px;width:14px;height:20px;background:linear-gradient(90deg,rgba(10,10,10,0),#0a0a0a)"></div>
<span class="t tab" style="left:101px;top:10px;color:#7a7a7a;letter-spacing:.24px">New Chat</span>
<span class="t tab" style="left:170px;top:10px;color:#f2f2f2"><i class=k>고급</i> <i class=k>프롬프</i></span>
<svg class="abs" style="left:240px;top:14px" width="11" height="11" viewBox="0 0 11 11"><path d="M5.500 .8v9.400M.8 5.500h9.400" stroke="#8a8a8a" stroke-width="1.700"/></svg>
<svg class="abs" style="left:261px;top:12px" width="14" height="14" viewBox="0 0 14 14" fill="none" stroke="#8a8a8a" stroke-width="1.600"><path d="M2.300 4.200A5.600 5.600 0 111.400 7"/><path d="M.8 1.800l1.300 2.700 2.700-1"/><path d="M7 3.800V7.300l2.200 1.300"/></svg>
<svg class="abs" style="left:285px;top:18px" width="11" height="3" viewBox="0 0 11 3"><rect x=".2" y=".4" width="2.400" height="2.200" fill="#8a8a8a"/><rect x="4.300" y=".4" width="2.400" height="2.200" fill="#8a8a8a"/><rect x="8.400" y=".4" width="2.400" height="2.200" fill="#8a8a8a"/></svg>
<svg class="abs" style="left:308px;top:14px" width="10" height="10" viewBox="0 0 10 10"><path d="M.8.800l8.400 8.400M9.200.800L.8 9.200" stroke="#9a9a9a" stroke-width="1.300"/></svg>

<div class="abs" style="left:14px;top:36px;width:306px;height:86px;border:1px solid #242424;border-radius:9px;background:#0d0d0d;overflow:hidden">
<span class="t" style="left:8px;top:9px;font-size:12px;color:#f4f4f4">Gemini API<i class=k>에</i> <i class=k>주입할</i> <i class=k>고급</i> <i class=k>프롬프트</i> <i class=k>규칙은</i></span>
<span class="t" style="left:8px;top:28.500px;font-size:12px;color:#f4f4f4"><i class=k>아래</i> <i class=k>내용을</i> <i class=k>최대한</i> <i class=k>반영해서</i> <i class=k>재구성합니다</i>.</span>
<span class="t" style="left:8px;top:67px;font-size:12px;color:#6a6a6a">instructions:</span>
<div class="abs" style="left:0;top:60px;width:304px;height:26px;background:linear-gradient(180deg,rgba(13,13,13,0),#0d0d0d 85%)"></div>
<svg class="abs" style="left:284px;top:59px" width="13" height="12" viewBox="0 0 13 12" fill="none" stroke="#7a7a7a" stroke-width="1.200"><path d="M4.600 1L1 4.600l3.600 3.600"/><path d="M1 4.600h7.200a3.400 3.400 0 010 6.800H6.800"/></svg>
</div>
<div class="ct" style="top:128.1px"><code>main</code> <i class=k>함수도</i> <i class=k>업데이트하여</i> <code class=e>generate_blog_conten</code></div><div class="ct" style="top:147.4px"><code class=s>t</code><i class=k>를</i> <i class=k>새로운</i> <i class=k>시그니처에</i> <i class=k>맞게</i> <i class=k>호출하도록</i> <i class=k>수정했습</i></div><div class="ct" style="top:166.8px"><i class=k>니다</i>. <i class=k>이제</i> <i class=k>모든</i> <i class=k>요청된</i> <i class=k>변경</i> <i class=k>사항이</i> <i class=k>반영되었습니</i></div><div class="ct" style="top:186.1px"><i class=k>다</i>.</div>
<div class="abs" style="left:18px;top:214px;width:298px;height:36px;border:1px solid #242424;border-radius:8px"></div>
<svg class="abs" style="left:32px;top:227px" width="10" height="10" viewBox="0 0 10 10" fill="none" stroke="#8a8a8a" stroke-width="1"><circle cx="1.800" cy="2.300" r="1.200"/><circle cx="1.800" cy="7.300" r="1.200"/><path d="M4.200 2.300h5.300M4.200 7.300h5.300"/></svg>
<span class="t" style="left:49px;top:224.500px;font-size:12px;color:#9a9a9a">3 of 3 Done</span>
<svg class="abs" style="left:296px;top:226px" width="8" height="12" viewBox="0 0 8 12" fill="none" stroke="#6a6a6a" stroke-width="1.100"><path d="M1 4.200L4 1.200 7 4.200M1 7.800L4 10.800 7 7.800"/></svg>
<div class="ct" style="top:262.1px"><i class=k>이제</i> <code class=l>AI_<i class=k>작사작곡</i>_<i class=k>세션</i>.py</code> <i class=k>파일의</i> <code class=e>generate_blog_</code></div><div class="ct" style="top:281.4px"><code class=s>content</code> <i class=k>함수가</i> <i class=k>고급</i> <i class=k>프롬프트</i> <i class=k>규칙을</i> <i class=k>반영하고</i>, <code class=e>m</code></div><div class="ct" style="top:300.8px"><code class=s>ain</code> <i class=k>함수가</i> <i class=k>이를</i> <i class=k>적절히</i> <i class=k>호출하도록</i> <i class=k>수정되었습니</i></div><div class="ct" style="top:320.1px"><i class=k>다</i>.</div><div class="ct" style="top:345.1px"><i class=k>필수</i> <i class=k>형태소</i> <i class=k>자동</i> <i class=k>추천이나</i> <i class=k>웹</i> <i class=k>검색</i> <i class=k>워크플로우는</i></div><div class="ct" style="top:364.6px"><i class=k>이</i> <i class=k>파이썬</i> <i class=k>스크립트의</i> <i class=k>범위</i> <i class=k>밖에서</i> <i class=k>이루어져야</i> <i class=k>하</i></div><div class="ct" style="top:384.2px"><i class=k>는</i> <i class=k>작업이므로</i>, <i class=k>현재</i> <i class=k>코드에는</i> <i class=k>직접적으로</i> <i class=k>반영되지</i></div><div class="ct" style="top:403.9px"><i class=k>않았습니다</i>. <i class=k>프롬프트</i> <i class=k>내에</i> <i class=k>해당</i> <i class=k>내용이</i> <i class=k>명시되어</i></div><div class="ct" style="top:423.4px"><i class=k>있어</i> Gemini <i class=k>모델이</i> <i class=k>그</i> <i class=k>역할을</i> <i class=k>수행하도록</i> <i class=k>유도하</i></div><div class="ct" style="top:443.1px"><i class=k>고</i> <i class=k>있습니다</i>.</div><div class="ct" style="top:468.6px"><i class=k>모든</i> <i class=k>작업이</i> <i class=k>완료되었습니다</i>.</div>
<svg class="abs" style="left:19px;top:512px" width="12" height="10" viewBox="0 0 12 10"><path d="M0 1h12M0 3.600h12M0 6.200h12M0 8.800h8" stroke="#6e6e6e" stroke-width="1.300"/></svg>
<span class="t" style="left:36px;top:509px;font-size:12px;color:#7a7a7a;letter-spacing:-.4px">Review Changes</span>
<svg class="abs" style="left:228px;top:510px" width="12" height="12" viewBox="0 0 12 12" fill="none" stroke="#8a8a8a" stroke-width="1.100"><path d="M3.400 5.400v5.600H1V5.400zM3.400 5.400L6 1c1.200 0 1.700 1 1.400 2l-.5 1.800h3c.8 0 1.300.7 1.100 1.500l-.9 3.600c-.2.700-.7 1.100-1.400 1.100H3.400"/></svg>
<svg class="abs" style="left:250px;top:511px" width="12" height="12" viewBox="0 0 12 12" fill="none" stroke="#8a8a8a" stroke-width="1.100"><g transform="rotate(180 6 6)"><path d="M3.400 5.400v5.600H1V5.400zM3.400 5.400L6 1c1.200 0 1.700 1 1.400 2l-.5 1.800h3c.8 0 1.300.7 1.100 1.500l-.9 3.600c-.2.700-.7 1.100-1.400 1.100H3.400"/></g></svg>
<svg class="abs" style="left:272px;top:510px" width="12" height="12" viewBox="0 0 12 12" fill="none" stroke="#8a8a8a" stroke-width="1.200"><rect x="3.600" y="3.600" width="7.600" height="7.600" rx="1.500"/><path d="M8.400 1.600C8.400 1 8 .7 7.400 .7H2.200C1.300 .7 .8 1.200 .8 2.200v5.200c0 .6.300 1 .9 1"/></svg>
<svg class="abs" style="left:298px;top:515px" width="11" height="3" viewBox="0 0 11 3"><rect x=".2" y=".4" width="2.400" height="2.200" fill="#8a8a8a"/><rect x="4.300" y=".4" width="2.400" height="2.200" fill="#8a8a8a"/><rect x="8.400" y=".4" width="2.400" height="2.200" fill="#8a8a8a"/></svg>

<div class="abs" style="left:18px;top:616px;width:298px;height:40px;border:1px solid #222;border-radius:9px 9px 0 0;background:#111"></div>
<svg class="abs" style="left:31px;top:626px" width="7" height="10" viewBox="0 0 7 10" fill="none" stroke="#8a8a8a" stroke-width="1.200"><path d="M1 .8L5.800 5 1 9.200"/></svg>
<span class="t" style="left:44px;top:622px;font-size:12px;color:#a8a8a8;letter-spacing:-.4px">1 File</span>
<span class="t" style="left:202px;top:622px;font-size:12px;color:#8a8a8a">Undo All</span>
<div class="abs" style="left:257px;top:620px;width:53px;height:20px;border:1px solid #2c2c2c;border-radius:4px"></div>
<span class="t" style="left:262px;top:622px;font-size:12px;color:#e2e2e2;letter-spacing:-.2px">Keep All</span>
<div class="abs" style="left:12px;top:643px;width:310px;height:105px;border:1px solid #262626;border-radius:10px;background:#111"></div>
<div class="abs" style="left:21px;top:652px;width:20px;height:19px;border:1px solid #2c2c2c;border-radius:4px"></div>
<span class="t" style="left:26px;top:653px;font-size:11px;color:#b0b0b0">@</span>
<div class="abs" style="left:45px;top:652px;width:132px;height:19px;border:1px solid #2c2c2c;border-radius:4px"></div>
<svg class="abs" style="left:49px;top:657px" width="9" height="9" viewBox="0 0 12 12"><g fill="#58a6d0" stroke="#58a6d0" stroke-width=".5"><path d="M6 .3C3.700 .3 3.300 1.300 3.300 2.200V3.200H6.200V3.900H2.300C.900 3.900 .3 4.900 .3 6S.900 8.200 2.300 8.200H3.200V6.900C3.200 5.800 4.100 5.200 5 5.200H7.200C8.100 5.200 8.700 4.600 8.700 3.800V2.200C8.700 1.100 7.800 .3 6 .3z"/><path transform="rotate(180 6 6)" d="M6 .3C3.700 .3 3.300 1.300 3.300 2.200V3.200H6.200V3.900H2.300C.900 3.900 .3 4.900 .3 6S.900 8.200 2.300 8.200H3.200V6.900C3.200 5.800 4.100 5.200 5 5.200H7.200C8.100 5.200 8.700 4.600 8.700 3.800V2.200C8.700 1.100 7.800 .3 6 .3z"/></g><circle cx="4.500" cy="1.900" r=".5" fill="#0a0a0a"/><circle cx="7.500" cy="10.100" r=".5" fill="#0a0a0a"/></svg>
<span class="t" style="left:63px;top:653px;font-size:11px;color:#f0f0f0">AI_<i class=k>작사작곡</i>_<i class=k>세션</i>.py</span>
<div class="abs" style="left:257px;top:653px;width:55px;height:17px;border-radius:4px;background:#171717"></div>
<span class="t" style="left:261px;top:653px;font-size:11px;color:#b8b8b8">21.3%</span>
<svg class="abs" style="left:297px;top:655px" width="13" height="13" viewBox="0 0 13 13" fill="none" stroke-width="1.600"><circle cx="6.500" cy="6.500" r="5.200" stroke="#3a3a3a"/><path d="M6.500 1.300A5.200 5.200 0 0111 4" stroke="#9a9a9a"/></svg>
<span class="t" style="left:21px;top:680px;font-size:12.700px;color:#575757">Plan, search, build anything</span>
<div class="abs" style="left:21px;top:720px;width:63px;height:19px;border-radius:10px;background:#2b2b2b"></div>
<svg class="abs" style="left:28px;top:726px" width="14" height="7" viewBox="0 0 14 7" fill="none" stroke="#8e8e8e" stroke-width="1.500"><path d="M7 3.500C5.500 1 4.500 .9 3.500 .9a2.600 2.600 0 000 5.200C4.500 6.100 5.500 6 7 3.500s2.500-2.600 3.500-2.600a2.600 2.600 0 010 5.200C9.500 6.100 8.500 6 7 3.500z"/></svg>
<span class="t" style="left:45px;top:721px;font-size:10.500px;color:#8e8e8e;letter-spacing:-.2px">Ctrl+I</span>
<svg class="abs" style="left:72px;top:727px" width="8" height="5" viewBox="0 0 8 5" fill="none" stroke="#8e8e8e" stroke-width="1.100"><path d="M.7 4.300L4 1l3.300 3.300"/></svg>
<span class="t" style="left:92px;top:721px;font-size:12px;color:#a8a8a8">gemini-2.5-flash</span>
<svg class="abs" style="left:181px;top:724px" width="13" height="11" viewBox="0 0 13 11" fill="none" stroke="#8a8a8a" stroke-width="1"><path d="M4.500 1C3 1 2.300 2 2.500 3 1.200 3.200.6 4.500 1.200 5.600.5 6.800 1.300 8.300 2.800 8.300 3 9.500 4.300 10 5.300 9.500V2C5.300 1.400 5 1 4.500 1zM7.500 1.500C9 1 10.200 2 10 3.200c1.300.3 2 1.600 1.300 2.800.6 1.200-.2 2.600-1.600 2.600-.4 1.200-1.800 1.500-2.700.8"/><path d="M7.300 4.500h2M6.800 6.800h2.400"/></svg>
<svg class="abs" style="left:198px;top:727px" width="8" height="5" viewBox="0 0 8 5" fill="none" stroke="#5a5a5a" stroke-width="1.100"><path d="M.7 4.300L4 1l3.300 3.300"/></svg>
<svg class="abs" style="left:271px;top:725px" width="14" height="10" viewBox="0 0 14 10"><rect x=".5" y=".5" width="13" height="9" rx="1.200" fill="#8a8a8a"/><path d="M1.500 8.500l3.200-3.600 2.400 2.400 1.800-1.500 3.600 2.700z" fill="#111"/><circle cx="9.800" cy="3" r="1" fill="#111"/></svg>
<div class="abs" style="left:292px;top:720px;width:20px;height:20px;border-radius:10px;background:#3b3b3b"></div>
<svg class="abs" style="left:297px;top:725px" width="10" height="11" viewBox="0 0 10 11" fill="none" stroke="#707070" stroke-width="1.300"><path d="M5 10.500V1.500M1 5.200l4-4 4 4"/></svg>
</div>
<div id="status" class="abs">
<div class="abs" style="left:0;top:0;width:25px;height:19px;background:#76adbe"></div>
<svg class="abs" style="left:5px;top:3px" width="14" height="13" viewBox="0 0 14 13" fill="none" stroke="#1d3f4a" stroke-width="1.300"><path d="M1 4.500L4.500 8 1 11.500M12.500 1.500L9 5l3.500 3.500"/></svg>
<svg class="abs" style="left:34px;top:5px" width="13" height="13" viewBox="0 0 13 13" fill="none" stroke="#cdcdcd" stroke-width="1.100"><circle cx="6.500" cy="6.500" r="5.700"/><path d="M4.200 4.200l4.600 4.600M8.800 4.200L4.200 8.800"/></svg>
<span class="t" style="left:51px">77</span>
<svg class="abs" style="left:67px;top:5px" width="14" height="13" viewBox="0 0 14 13" fill="none" stroke="#cdcdcd" stroke-width="1.100"><path d="M7 1L13 12H1z"/><path d="M7 5v3.600M7 9.600v1.200"/></svg>
<span class="t" style="left:84px">66</span>
<span class="t" style="left:895px;letter-spacing:-.3px">Cursor Tab</span>
<span class="t" style="left:968px;letter-spacing:-.35px"><i class=k>줄</i> 125, <i class=k>열</i> 20</span>
<span class="t" style="left:1052px;letter-spacing:-.7px"><i class=k>공백</i>: 4</span>
<span class="t" style="left:1105px;letter-spacing:-.5px">UTF-8</span>
<span class="t" style="left:1152px;letter-spacing:-1.200px">CRLF</span>
<span class="t" style="left:1194px">Python</span>
<span class="t" style="left:1247px">3.11.9 64-bit</span>
<svg class="abs" style="left:1330px;top:4px" width="13" height="13" viewBox="0 0 13 13" fill="none" stroke="#cdcdcd" stroke-width="1.100"><circle cx="6.500" cy="5.600" r="1.500"/><path d="M3.700 8.400a4 4 0 115.600 0M2 10a6 6 0 119 0M6.500 7.100V12.500"/></svg>
<span class="t" style="left:1347px;letter-spacing:-.3px">Go Live</span>
<svg class="abs" style="left:1403px;top:4px" width="12" height="13" viewBox="0 0 12 13" fill="none" stroke="#cdcdcd" stroke-width="1.100"><path d="M1 10.300h10L9.700 8.200V5.300a3.700 3.700 0 00-7.400 0v2.900zM4.600 11.300a1.400 1.400 0 002.800 0"/></svg>
</div>
</body>
</html>
